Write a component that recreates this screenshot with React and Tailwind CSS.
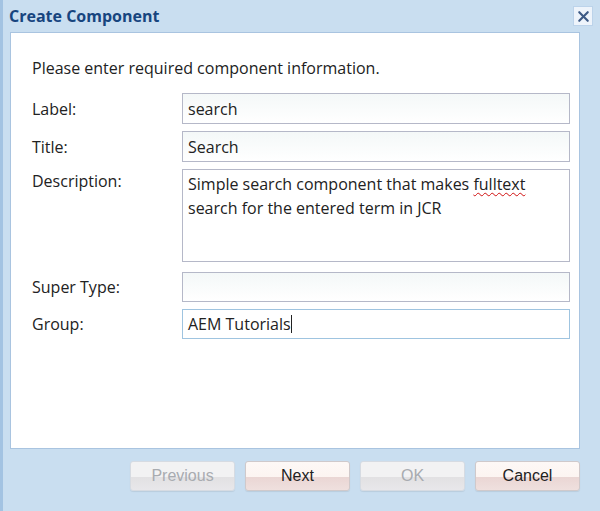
import { X } from "lucide-react";

const labelCls = "w-[150px] shrink-0 text-[16px] text-[#222]";
const inputCls =
  "w-[388px] h-[31px] border border-[#b5b8c8] bg-gradient-to-b from-[#f4f8f8] to-white px-[5px] text-[16px] text-[#222] outline-none";

function Row({ label, children, className = "" }) {
  return (
    <div className={"flex items-center " + className}>
      <div className={labelCls}>{label}</div>
      {children}
    </div>
  );
}

function Btn({ children, disabled }) {
  return (
    <button
      className={
        "w-[105px] h-[30px] rounded-[3px] border text-[16px] shadow-[0_1px_1px_rgba(0,0,0,0.08)] " +
        (disabled
          ? "border-[#d6dbe2] bg-[linear-gradient(#f2f2f3_0,#f2f2f3_55%,#e2e1e3_55%,#e8e7ea_100%)] text-[#a8abb0]"
          : "border-[#cfc9cb] bg-[linear-gradient(#fdf8f6_0,#fcf4f1_55%,#ead6d4_55%,#efe0de_100%)] text-[#222]")
      }
      style={{ fontFamily: '"Liberation Sans", Arial, sans-serif' }}
    >
      {children}
    </button>
  );
}

export default function App() {
  return (
    <div
      className="w-[600px] h-[511px] bg-[#c9def0] border-l-[3px] border-[#a3c3e2] flex flex-col overflow-hidden"
      style={{ fontFamily: '"Open Sans", "DejaVu Sans", sans-serif' }}
    >
      {/* Title bar */}
      <div className="h-[32px] flex items-center justify-between pl-[6px] pr-[7px] shrink-0">
        <span className="text-[16px] font-bold text-[#17457f]">Create Component</span>
        <span className="w-[20px] h-[20px] bg-[#eef4fb] border border-[#bcd3ea] flex items-center justify-center">
          <X size={17} strokeWidth={3} className="text-[#3d5a86]" />
        </span>
      </div>

      {/* Body */}
      <div className="ml-[7px] w-[570px] h-[417px] bg-white border border-[#a9c4e0] pl-[21px] pt-[23px]">
        <p className="text-[16px] text-[#222] leading-[24px]">
          Please enter required component information.
        </p>
        <div className="mt-[13px] flex flex-col gap-[7px]">
          <Row label="Label:">
            <div className={inputCls + " flex items-center"}>search</div>
          </Row>
          <Row label="Title:">
            <div className={inputCls + " flex items-center"}>Search</div>
          </Row>
          <Row label="Description:" className="!items-start">
            <div className="w-[388px] h-[93px] border border-[#b5b8c8] bg-white px-[5px] pt-[2px] text-[16px] leading-[24px] text-[#222]">
              Simple search component that makes{" "}
              <span className="underline decoration-wavy decoration-[#d01010] decoration-1 underline-offset-2">
                fulltext
              </span>{" "}
              search for the entered term in JCR
            </div>
          </Row>
          <Row label="Super Type:" className="mt-[3px]">
            <div className={inputCls + " !h-[30px]"}></div>
          </Row>
          <Row label="Group:">
            <div className={inputCls + " !h-[30px] flex items-center !border-[#9fc4e0] !bg-none bg-white"}>
              AEM Tutorials
              <span className="inline-block w-px h-[18px] bg-[#222]"></span>
            </div>
          </Row>
        </div>
      </div>

      {/* Footer */}
      <div className="flex justify-end gap-[10px] pr-[20px] pt-[12px]">
        <Btn disabled>Previous</Btn>
        <Btn>Next</Btn>
        <Btn disabled>OK</Btn>
        <Btn>Cancel</Btn>
      </div>
    </div>
  );
}
